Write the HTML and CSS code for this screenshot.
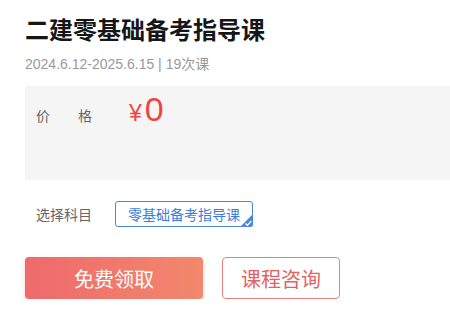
FILE: index.html
```html
<!DOCTYPE html>
<html lang="zh">
<head>
<meta charset="utf-8">
<link rel="stylesheet" href="styles.css">
</head>
<body>
<div class="page">
  <h1 class="title">二建零基础备考指导课</h1>
  <div class="sub">2024.6.12-2025.6.15 | 19次课</div>
  <div class="pricebox">
    <div class="price-row">
      <span class="label">价<span class="spacer"></span>格</span>
      <span class="yen">¥</span><span class="amount">0</span>
    </div>
  </div>
  <div class="subject-row">
    <span class="label">选择科目</span>
    <span class="tag">零基础备考指导课
      <svg class="tick" width="13" height="13" viewBox="0 0 13 13"><polygon points="13,0 13,13 0,13" fill="#4a86e0"/><polyline points="5.5,9.5 7.5,11.3 11.2,7" fill="none" stroke="#fff" stroke-width="1.3"/></svg>
    </span>
  </div>
  <div class="btn-row">
    <button class="btn primary">免费领取</button>
    <button class="btn ghost">课程咨询</button>
  </div>
</div>
</body>
</html>
```
FILE: styles.css
```css
html, body { margin: 0; padding: 0; background: #fff; }
body { font-family: "Liberation Sans", "Noto Sans CJK SC", sans-serif; }
.page { padding: 15px 0 0 25px; }
.title {
  margin: 0;
  font-size: 24px;
  line-height: 32px;
  font-weight: bold;
  color: #161616;
}
.sub {
  margin-top: 7px;
  font-size: 14px;
  line-height: 20px;
  color: #999;
}
.pricebox {
  margin-top: 12px;
  height: 94px;
  background: #f5f5f5;
  box-sizing: border-box;
  padding: 6px 0 0 11px;
}
.price-row {
  display: flex;
  align-items: baseline;
}
.label {
  display: inline-flex;
  width: 56px;
  font-size: 14px;
  color: #666;
}
.spacer { flex: 1; }
.yen {
  margin-left: 37px;
  font-size: 23px;
  color: #ef4444;
}
.amount {
  margin-left: 3px;
  font-size: 34px;
  line-height: 34px;
  color: #ef4444;
}
.subject-row {
  margin-top: 21px;
  padding-left: 11px;
  display: flex;
  align-items: center;
}
.tag {
  position: relative;
  margin-left: 23px;
  width: 138px;
  height: 26px;
  box-sizing: border-box;
  border: 1px solid #4a86e0;
  border-radius: 3px;
  display: flex;
  align-items: center;
  justify-content: center;
  font-size: 14px;
  color: #3b7ddd;
}
.tick {
  position: absolute;
  right: -1px;
  bottom: -1px;
  border-bottom-right-radius: 3px;
}
.btn-row {
  margin-top: 30px;
  display: flex;
  gap: 19px;
}
.btn {
  height: 42px;
  border-radius: 4px;
  font-family: "Liberation Sans", "Noto Sans CJK SC", sans-serif;
  font-size: 20px;
  padding: 0;
  cursor: pointer;
}
.primary {
  width: 178px;
  border: none;
  color: #fff;
  background: linear-gradient(90deg, #ee6a6c, #f2886c);
  box-shadow: 0 2px 4px rgba(230, 110, 100, 0.35);
}
.ghost {
  width: 118px;
  background: #fff;
  border: 1px solid #e6807c;
  color: #e4625f;
}
```
